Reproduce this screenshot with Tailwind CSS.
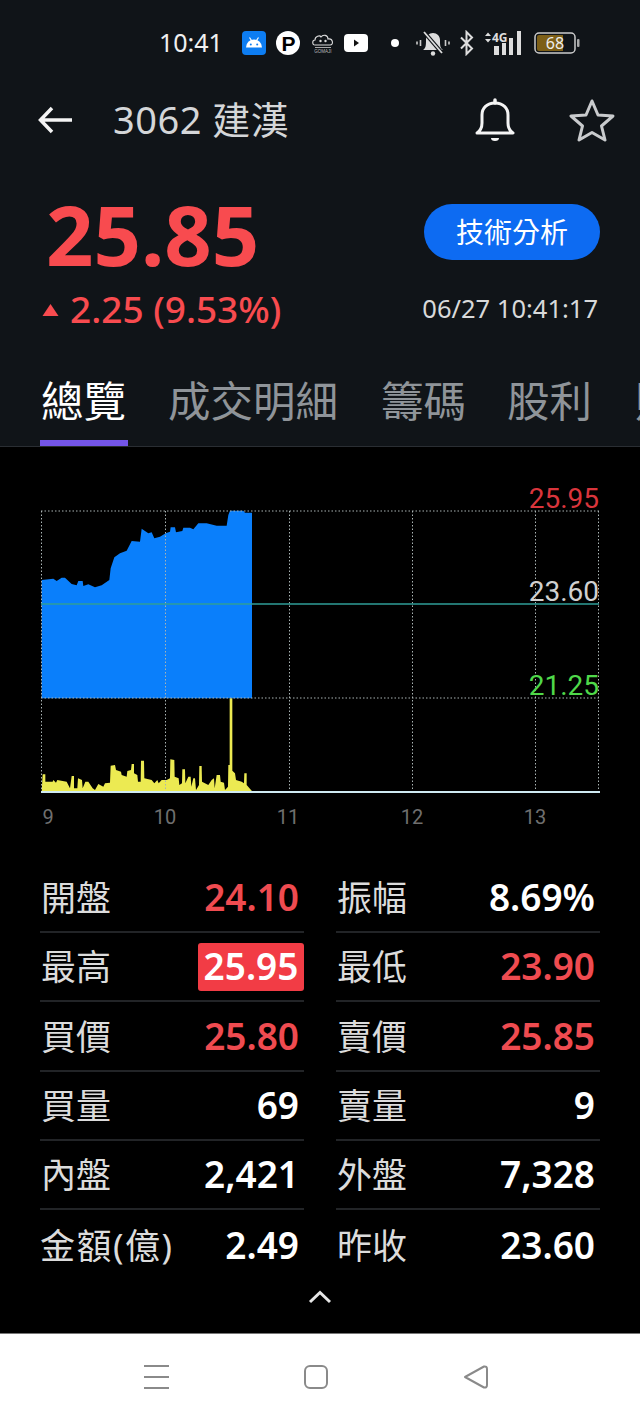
<!DOCTYPE html>
<html lang="zh-Hant">
<head>
  <meta charset="UTF-8" />
  <meta name="viewport" content="width=device-width, initial-scale=1.0"/>
  <title>3062 建漢</title>
  <script src="https://cdn.jsdelivr.net/npm/@tailwindcss/browser@4"></script>
</head>
<body class="bg-black">
  <div class="w-[640px] h-[1422px] overflow-hidden flex flex-col bg-black text-white font-['Noto_Sans','Noto_Sans_CJK_TC',sans-serif]">

    <!-- Top section -->
    <div class="h-[447px] bg-[#101418] flex flex-col shrink-0">
      <!-- Status bar -->
      <div class="h-[86px] flex items-center pl-[159px] relative">
        <span class="text-[25px] text-[#f0f0f0] w-[83px]">10:41</span>
        <svg class="w-[24px] h-[24px]" viewBox="0 0 24 24"><rect width="24" height="24" rx="4" fill="#0d7df2"/><path d="M4 16.500a8 8 0 0 1 16 0z" fill="#fff"/><path d="M7.500 6.500l2 3M16.500 6.500l-2 3" stroke="#fff" stroke-width="1.200"/><circle cx="8.800" cy="13.500" r="1" fill="#0d7df2"/><circle cx="15.200" cy="13.500" r="1" fill="#0d7df2"/></svg>
        <svg class="w-[24px] h-[24px] ml-[10px]" viewBox="0 0 24 24"><circle cx="12" cy="12" r="12" fill="#fff"/><text x="12.500" y="19.500" text-anchor="middle" font-size="21" font-weight="900" fill="#000" font-family="Liberation Sans">P</text></svg>
        <svg class="w-[24px] h-[24px] ml-[11px]" viewBox="0 0 24 24"><path d="M4 14c-3 0-3-5 0-5 0-4 5-5 6-3 2-3 7-2 7 2 5-1 6 6 2 6z" fill="none" stroke="#ddd" stroke-width="1.100"/><circle cx="9.500" cy="10" r="1.200" fill="#ddd"/><circle cx="14.500" cy="10" r="1.200" fill="#ddd"/><path d="M4 16.500h16" stroke="#aaa"/><text x="12" y="22" text-anchor="middle" font-size="4.500" fill="#bbb" font-family="Liberation Sans">GOMAJI</text></svg>
        <svg class="w-[24px] h-[18px] ml-[9px]" viewBox="0 0 24 18"><rect width="24" height="18" rx="4" fill="#fff"/><path d="M10 5.500l5 3.500-5 3.500z" fill="#111"/></svg>
        <span class="w-[8px] h-[8px] rounded-full bg-white ml-[23px]"></span>
        <svg class="w-[34px] h-[28px] ml-[17px]" viewBox="0 0 34 28"><path d="M7 21c3-2 3-5 3-10 0-4 3-7 7-7s7 3 7 7c0 5 0 8 3 10z" fill="#ddd"/><circle cx="17" cy="24.500" r="2.200" fill="#ddd"/><path d="M8 3l18 21" stroke="#101418" stroke-width="4"/><path d="M8 3l18 21" stroke="#ddd" stroke-width="1.800"/><path d="M4.500 11v6M1 12.500v3M29.500 11v6M33 12.500v3" stroke="#ccc" stroke-width="1.600"/></svg>
        <svg class="w-[16px] h-[26px] ml-[9px]" viewBox="0 0 16 26"><path d="M2 7.500l11 11-5.500 5.500V2L13 7.500 2 18.500" fill="none" stroke="#ddd" stroke-width="2"/></svg>
        <svg class="w-[42px] h-[26px] ml-[8px]" viewBox="0 0 42 26"><path d="M2 6l3-3.500L8 6zM2 9l3 3.500L8 9z" fill="#ddd"/><text x="9" y="12" font-size="12" font-weight="700" fill="#ddd" font-family="Noto Sans">4G</text><path d="M11 16h5v9h-5zM19 13h4v12h-4zM26 8h4v17h-4zM34 1h4v24h-4z" fill="#ddd"/></svg>
        <svg class="w-[46px] h-[22px] ml-[9px]" viewBox="0 0 46 22"><rect x="1" y="1" width="40" height="20" rx="4" fill="none" stroke="#ccc" stroke-width="1.500"/><path d="M3 5a2 2 0 0 1 2-2h24v16H5a2 2 0 0 1-2-2z" fill="#7d5f17"/><text x="21" y="17" text-anchor="middle" font-size="16" fill="#eee" font-family="Noto Sans">68</text><rect x="43" y="7" width="2.500" height="8" rx="1" fill="#aaa"/></svg>
      </div>

      <!-- Nav -->
      <div class="h-[68px] flex items-center pl-[38px]">
        <svg class="w-[36px] h-[30px]" viewBox="0 0 36 30"><path d="M34 15H3M14 3L2.500 15 14 27" fill="none" stroke="#f4f4f4" stroke-width="3.500"/></svg>
        <div class="ml-[39px] pb-[3px] text-[38px] leading-none tracking-[0.5px] text-[#d4d6d8] w-[361px]">3062 建漢</div>
        <svg class="w-[44px] h-[46px] -ml-[1px]" viewBox="0 0 44 46"><path d="M4 36c3-2 5-5 5-10v-8c0-7 5-12 13-12s13 5 13 12v8c0 5 2 8 5 10z" fill="none" stroke="#f4f4f4" stroke-width="3" stroke-linejoin="round"/><path d="M22 6V3" stroke="#f4f4f4" stroke-width="3.500" stroke-linecap="round"/><path d="M18 41h8a4 3 0 0 1-8 0z" fill="#f4f4f4"/></svg>
        <svg class="w-[46px] h-[44px] ml-[52px]" viewBox="0 0 46 44"><path d="M23 3l6 14 15 1-11.500 10L36 42 23 34.500 10 42l3.500-14L2 18l15-1z" fill="none" stroke="#c9cbcd" stroke-width="3" stroke-linejoin="round"/></svg>
      </div>

      <!-- Price -->
      <div class="mt-[36px] h-[86px] flex items-center justify-between pl-[46px] pr-[40px]">
        <div class="text-[83px] leading-none font-bold text-[#f84b4f]">25.85</div>
        <div class="w-[176px] h-[56px] -mt-[2px] rounded-full bg-[#0d6bf2] flex items-center justify-center text-[28px] text-white">技術分析</div>
      </div>
      <div class="h-[68px] pb-[4px] flex items-center justify-between pl-[42px] pr-[42px]">
        <div class="flex items-center text-[#f84b4f]">
          <svg class="w-[17px] h-[14px] mr-[11px] mt-[4px]" viewBox="0 0 17 14"><path d="M8.500 1L16.500 13H.5z" fill="#f84b4f"/></svg>
          <span class="text-[37px] leading-none font-medium">2.25 (9.53%)</span>
        </div>
        <div class="text-[25.500px] text-[#d8d9da]">06/27 10:41:17</div>
      </div>

      <!-- Tabs -->
      <div class="h-[103px] flex pl-[40px] text-[42.500px] leading-none text-[#8f9499] overflow-hidden border-b border-[#2a2e33] whitespace-nowrap">
        <div class="h-full w-[88px] pt-[36px] px-[1px] border-b-[6px] border-[#7455e8] text-white shrink-0">總覽</div>
        <div class="pt-[36px] ml-[40px] shrink-0">成交明細</div>
        <div class="pt-[36px] ml-[43px] shrink-0">籌碼</div>
        <div class="pt-[36px] ml-[41px] shrink-0">股利</div>
        <div class="pt-[36px] ml-[43px] shrink-0">財報</div>
      </div>
    </div>

    <!-- Chart -->
    <svg class="block mt-[33px] w-[640px] h-[350px] shrink-0" viewBox="0 480 640 350" font-family="Roboto">
      <g transform="translate(20 480) scale(.33333)">
        <path fill="#0a7ffb" d="M65 655V300L100 296 110 303 125 293 135 293 155 312 170 316 175 303 188 303 190 318 205 313 225 322 245 316 268 300 272 265 283 232 300 220 320 212 335 183 360 185 365 146 385 160 395 157 403 175 420 170 437 160 450 155 452 142 465 142 468 157 487 153 490 143 510 143 520 148 535 130 560 130 590 137 620 137 625 105 630 92 670 92 675 98 696 98V655Z"/>
        <path fill="#ecea52" d="M65 935L68 883 76 883 76 905 98 905 100 900 108 908 112 900 140 905 150 925 155 888 162 888 162 925 172 925 174 895 186 900 188 925 196 905 205 905 218 925 225 930 235 912 250 920 255 910 270 908 272 857 285 855 288 870 303 875 305 885 320 890 322 873 333 870 335 852 342 852 342 880 352 885 354 905 362 905 363 842 372 842 373 895 395 900 403 910 412 900 416 910 425 900 440 900 450 895 451 838 463 840 464 890 476 895 478 915 486 910 487 868 495 868 496 910 505 890 512 890 514 920 520 895 525 895 528 930 537 915 538 858 545 858 546 905 565 915 575 900 582 895 584 925 590 885 600 885 602 905 612 908 615 930 624 920 625 855 629 855 629 655 637 655 637 872 645 880 648 900 665 905 672 910 673 880 680 880 680 915 695 932 700 935Z"/>
      </g>
      <g stroke="#aab4b4" stroke-width="1" stroke-dasharray="1.500 2" fill="none">
        <path d="M41 511H599M41 698H599M41.500 511V792M165.500 511V792M289.500 511V792M412.500 511V792M535.500 511V792M598.500 511V792"/>
      </g>
      <path d="M41 604H599" stroke="#2f9e98" stroke-width="1.500"/>
      <path d="M41 792H600" stroke="#cfeaf2" stroke-width="2"/>
      <g font-size="28" text-anchor="end">
        <text x="599" y="508" fill="#d9353c">25.95</text>
        <text x="599" y="601" fill="#d0d0d0">23.60</text>
        <text x="599" y="695" fill="#4fd84a">21.25</text>
      </g>
      <g font-size="20" fill="#6f6f6f" text-anchor="middle">
        <text x="48" y="824">9</text>
        <text x="165" y="824">10</text>
        <text x="288" y="824">11</text>
        <text x="412" y="824">12</text>
        <text x="535" y="824">13</text>
      </g>
    </svg>

    <!-- Stats -->
    <div class="mt-[34px] grid grid-cols-[264px_264px] gap-x-[32px] px-[40px] text-[35px] leading-none">
      <div class="h-[69px] flex items-center justify-between border-b-2 border-[#222427] text-[#dcdcdc] pl-[1px] pr-[5px]"><span>開盤</span><span class="pb-[2px] text-[37px] font-semibold text-[#ef4b50]">24.10</span></div>
      <div class="h-[69px] flex items-center justify-between border-b-2 border-[#222427] text-[#dcdcdc] pl-[1px] pr-[5px]"><span>振幅</span><span class="pb-[2px] text-[37px] font-semibold text-white">8.69%</span></div>

      <div class="h-[69px] flex items-center justify-between border-b-2 border-[#222427] text-[#dcdcdc] pl-[1px]"><span>最高</span><span class="pb-[2px] text-[37px] font-semibold text-white bg-[#f23c45] rounded-[3px] h-[48px] w-[106px] flex items-center justify-center">25.95</span></div>
      <div class="h-[69px] flex items-center justify-between border-b-2 border-[#222427] text-[#dcdcdc] pl-[1px] pr-[5px]"><span>最低</span><span class="pb-[2px] text-[37px] font-semibold text-[#ef4b50]">23.90</span></div>

      <div class="h-[70px] flex items-center justify-between border-b-2 border-[#222427] text-[#dcdcdc] pl-[1px] pr-[5px]"><span>買價</span><span class="pb-[2px] text-[37px] font-semibold text-[#ef4b50]">25.80</span></div>
      <div class="h-[70px] flex items-center justify-between border-b-2 border-[#222427] text-[#dcdcdc] pl-[1px] pr-[5px]"><span>賣價</span><span class="pb-[2px] text-[37px] font-semibold text-[#ef4b50]">25.85</span></div>

      <div class="h-[69px] flex items-center justify-between border-b-2 border-[#222427] text-[#dcdcdc] pl-[1px] pr-[5px]"><span>買量</span><span class="pb-[2px] text-[37px] font-semibold text-white">69</span></div>
      <div class="h-[69px] flex items-center justify-between border-b-2 border-[#222427] text-[#dcdcdc] pl-[1px] pr-[5px]"><span>賣量</span><span class="pb-[2px] text-[37px] font-semibold text-white">9</span></div>

      <div class="h-[69px] flex items-center justify-between border-b-2 border-[#222427] text-[#dcdcdc] pl-[1px] pr-[5px]"><span>內盤</span><span class="pb-[2px] text-[37px] font-semibold text-white">2,421</span></div>
      <div class="h-[69px] flex items-center justify-between border-b-2 border-[#222427] text-[#dcdcdc] pl-[1px] pr-[5px]"><span>外盤</span><span class="pb-[2px] text-[37px] font-semibold text-white">7,328</span></div>

      <div class="h-[70px] flex items-center justify-between text-[#dcdcdc] pr-[5px]"><span class="tracking-[1.500px]">金額(億)</span><span class="pb-[2px] text-[37px] font-semibold text-white">2.49</span></div>
      <div class="h-[70px] flex items-center justify-between text-[#dcdcdc] pl-[1px] pr-[5px]"><span>昨收</span><span class="pb-[2px] text-[37px] font-semibold text-white">23.60</span></div>
    </div>

    <!-- Collapse -->
    <div class="flex-1 flex items-start justify-center pt-[10px]">
      <svg class="w-[24px] h-[14px]" viewBox="0 0 24 14"><path d="M2 12L12 2.500 22 12" fill="none" stroke="#e6e6e6" stroke-width="3"/></svg>
    </div>

    <!-- System nav -->
    <div class="h-[89px] bg-white border-t border-[#777] flex items-center shrink-0 pb-[2px]">
      <svg class="w-[26px] h-[26px] ml-[143px]" viewBox="0 0 26 26"><path d="M1 2H26M1 13H26M1 24H26" stroke="#8a8a8a" stroke-width="2"/></svg>
      <svg class="w-[26px] h-[26px] ml-[134px]" viewBox="0 0 26 26"><rect x="2" y="2" width="22" height="22" rx="5" fill="none" stroke="#8a8a8a" stroke-width="2"/></svg>
      <svg class="w-[26px] h-[26px] ml-[134px]" viewBox="0 0 26 26"><path d="M2 13L21 2.500Q24 2 24 5V21Q24 24 21 23.500z" fill="none" stroke="#8a8a8a" stroke-width="2" stroke-linejoin="round"/></svg>
    </div>
  </div>
</body>
</html>
